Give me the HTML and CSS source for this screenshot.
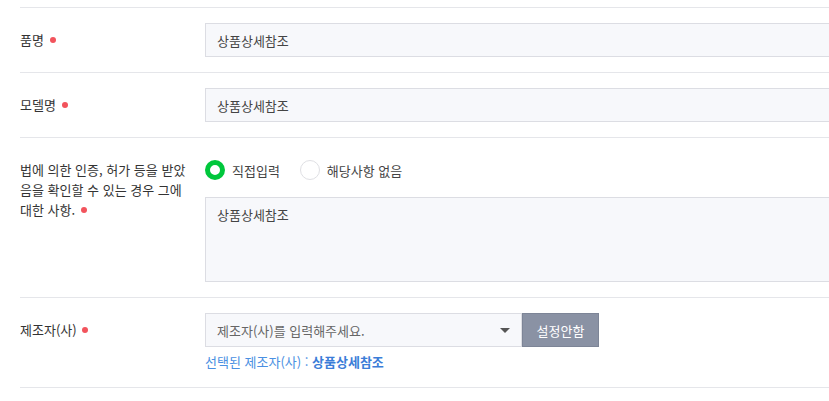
FILE: index.html
```html
<!DOCTYPE html>
<html lang="ko">
<head>
  <meta charset="UTF-8">
  <meta name="viewport" content="width=device-width, initial-scale=1.0">
  <title>상품정보제공고시</title>
  <link rel="stylesheet" href="styles.css">
</head>
<body>
  <div class="notice-form">
    <div class="row">
      <div class="label">품명 <span class="req"></span></div>
      <div class="field">
        <input type="text" class="text-input" value="상품상세참조">
      </div>
    </div>

    <div class="row">
      <div class="label">모델명 <span class="req"></span></div>
      <div class="field">
        <input type="text" class="text-input" value="상품상세참조">
      </div>
    </div>

    <div class="row row-top">
      <div class="label label-multi">법에 의한 인증, 허가 등을 받았<br>음을 확인할 수 있는 경우 그에<br>대한 사항. <span class="req"></span></div>
      <div class="field">
        <div class="radios">
          <label class="radio"><input type="radio" name="cert" checked><span class="mark"></span>직접입력</label>
          <label class="radio"><input type="radio" name="cert"><span class="mark"></span>해당사항 없음</label>
        </div>
        <textarea class="text-area">상품상세참조</textarea>
      </div>
    </div>

    <div class="row row-maker">
      <div class="label label-maker">제조자(사) <span class="req"></span></div>
      <div class="field">
        <div class="select-line">
          <div class="select-box">
            <span class="placeholder">제조자(사)를 입력해주세요.</span>
            <span class="caret"></span>
          </div>
          <button class="btn-none">설정안함</button>
        </div>
        <p class="selected">선택된 제조자(사) : <strong>상품상세참조</strong></p>
      </div>
    </div>
  </div>
</body>
</html>
```

FILE: styles.css
```css
body {
  margin: 0;
  font-family: "Noto Sans CJK KR", "Noto Sans", sans-serif;
  font-size: 13px;
  color: #333;
  background: #fff;
  overflow: hidden;
}

.notice-form {
  width: 1000px;
  padding: 7px 0 0 20px;
}

.row {
  display: flex;
  align-items: center;
  border-top: 1px solid #e5e6ea;
  padding: 15px 0;
}

.row:last-child {
  border-bottom: 1px solid #e5e6ea;
}

.row-top {
  align-items: flex-start;
  padding-top: 20px;
}

.row-maker {
  align-items: flex-start;
}

.label {
  width: 185px;
  flex: none;
  line-height: 20px;
}

.label-multi {
  padding-top: 2px;
}

.label-maker {
  line-height: 34px;
}

.req {
  display: inline-block;
  width: 6px;
  height: 6px;
  border-radius: 50%;
  background: #f2535c;
  vertical-align: middle;
  margin-left: 2px;
  position: relative;
  top: -1px;
}

.field {
  flex: 1;
}

.text-input,
.text-area {
  display: block;
  width: 100%;
  box-sizing: border-box;
  height: 34px;
  padding: 0 11px;
  border: 1px solid #dcdde3;
  background: #f7f8fb;
  font-family: inherit;
  font-size: 13px;
  color: #444;
  outline: none;
}

.text-area {
  height: 85px;
  padding: 8px 11px;
  margin-top: 15px;
  resize: none;
  line-height: 18px;
}

.radios {
  display: flex;
  height: 24px;
  align-items: center;
}

.radio {
  display: flex;
  align-items: center;
  margin-right: 20px;
  color: #444;
  cursor: pointer;
}

.radio input {
  display: none;
}

.radio .mark {
  width: 20px;
  height: 20px;
  box-sizing: border-box;
  border: 1px solid #dfe0e4;
  border-radius: 50%;
  background: #fff;
  margin-right: 7px;
}

.radio input:checked + .mark {
  border: 5px solid #00c73c;
}

.select-line {
  display: flex;
}

.select-box {
  width: 317px;
  height: 34px;
  box-sizing: border-box;
  border: 1px solid #dcdde3;
  background: #f7f8fb;
  display: flex;
  align-items: center;
  justify-content: space-between;
  padding: 0 11px;
  color: #666;
}

.caret {
  width: 0;
  height: 0;
  border-left: 5px solid transparent;
  border-right: 5px solid transparent;
  border-top: 5px solid #555;
}

.btn-none {
  width: 77px;
  height: 34px;
  border: 1px solid #7d8597;
  background: #8a92a4;
  color: #fff;
  font-family: inherit;
  font-size: 13px;
  padding: 0;
  cursor: pointer;
}

.selected {
  margin: 5px 0 0;
  line-height: 20px;
  color: #4a90e2;
}

.selected strong {
  color: #3b7dd8;
  font-weight: bold;
}
```
